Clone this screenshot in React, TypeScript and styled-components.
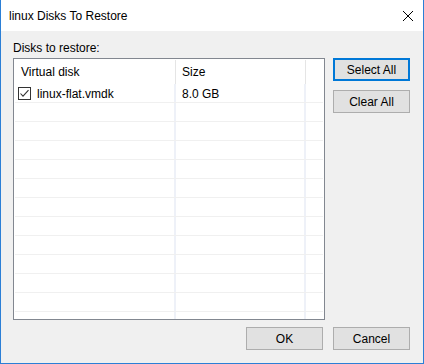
import React from 'react';
import styled, { createGlobalStyle } from 'styled-components';

const GlobalStyle = createGlobalStyle`
    html, body {
        margin: 0;
        padding: 0;
        background: #ffffff;
    }
    * {
        box-sizing: border-box;
    }
`;

const FONT = `"Liberation Sans", Arial, sans-serif`;

const disks = [{ name: 'linux-flat.vmdk', size: '8.0 GB', checked: true }];
const EMPTY_ROWS = 12;

export default function App() {
    return (
        <>
            <GlobalStyle />
            <Window>
                <TitleBar>
                    <Title>linux Disks To Restore</Title>
                    <CloseButton aria-label="Close">
                        <svg width="10" height="10" viewBox="0 0 10 10" shapeRendering="crispEdges">
                            <path d="M0 0 L10 10 M10 0 L0 10" stroke="#000" strokeWidth="1" fill="none" />
                        </svg>
                    </CloseButton>
                </TitleBar>
                <Body>
                    <Label>Disks to restore:</Label>
                    <Main>
                        <ListBox>
                            <HeaderRow>
                                <HeaderCell>Virtual disk</HeaderCell>
                                <HeaderCell>Size</HeaderCell>
                                <HeaderCell $last />
                            </HeaderRow>
                            {disks.map(d => (
                                <Row key={d.name}>
                                    <Cell $first>
                                        <CheckBox>
                                            {d.checked && (
                                                <svg width="11" height="11" viewBox="0 0 11 11">
                                                    <path d="M1.5 5.5 L4 8.2 L9.5 2.2" stroke="#333" strokeWidth="1.1" fill="none" />
                                                </svg>
                                            )}
                                        </CheckBox>
                                        <span>{d.name}</span>
                                    </Cell>
                                    <Cell>{d.size}</Cell>
                                    <Cell $last />
                                </Row>
                            ))}
                            {Array.from({ length: EMPTY_ROWS }).map((_, i) => (
                                <Row key={i}>
                                    <Cell $first />
                                    <Cell />
                                    <Cell $last />
                                </Row>
                            ))}
                        </ListBox>
                        <SideButtons>
                            <Button $focused>Select All</Button>
                            <Button>Clear All</Button>
                        </SideButtons>
                    </Main>
                    <Footer>
                        <Button>OK</Button>
                        <Button>Cancel</Button>
                    </Footer>
                </Body>
            </Window>
        </>
    );
}

const Window = styled.div`
    width: 424px;
    height: 364px;
    display: flex;
    flex-direction: column;
    border: 1px solid #2b7fd6;
    border-top: none;
    font-family: ${FONT};
    font-size: 12px;
    color: #000;
`;

const TitleBar = styled.div`
    height: 31px;
    flex-shrink: 0;
    display: flex;
    align-items: center;
    justify-content: space-between;
    padding-left: 8px;
    background: #ffffff;
`;

const Title = styled.span`
    font-size: 12px;
`;

const CloseButton = styled.div`
    width: 30px;
    height: 31px;
    display: flex;
    align-items: center;
    justify-content: center;
`;

const Body = styled.div`
    flex: 1;
    display: flex;
    flex-direction: column;
    background: #f0f0f0;
    padding: 9px 13px 13px 12px;
`;

const Label = styled.div`
    height: 16px;
    line-height: 16px;
    margin-bottom: 2px;
`;

const Main = styled.div`
    display: flex;
    gap: 8px;
`;

const ListBox = styled.div`
    width: 312px;
    height: 262px;
    border: 1px solid #828790;
    background: #ffffff;
    display: flex;
    flex-direction: column;
    overflow: hidden;
`;

const HeaderRow = styled.div`
    height: 25px;
    flex-shrink: 0;
    display: grid;
    grid-template-columns: 161px 130px 1fr;
    padding: 1px 1px 0;
`;

const HeaderCell = styled.div<{ $last?: boolean }>`
    display: flex;
    align-items: center;
    padding-left: 6px;
    padding-bottom: 1px;
    border-right: ${p => (p.$last ? 'none' : '1px solid #e5e5e5')};
`;

const Row = styled.div`
    height: 19px;
    flex-shrink: 0;
    display: grid;
    grid-template-columns: 161px 130px 1fr;
    margin: 0 1px;
    border-bottom: 1px solid #f0f0f0;
`;

const Cell = styled.div<{ $first?: boolean; $last?: boolean }>`
    display: flex;
    align-items: center;
    gap: 6px;
    padding-left: ${p => (p.$first ? '3px' : '6px')};
    padding-top: 1px;
    border-right: ${p => (p.$last ? 'none' : '2px solid #eef1f8')};
    white-space: nowrap;
`;

const CheckBox = styled.div`
    width: 13px;
    height: 13px;
    margin-top: -1px;
    border: 1px solid #333333;
    background: #ffffff;
    display: flex;
    align-items: center;
    justify-content: center;
`;

const SideButtons = styled.div`
    display: flex;
    flex-direction: column;
    gap: 9px;
`;

const Button = styled.div<{ $focused?: boolean }>`
    width: 77px;
    height: 23px;
    display: flex;
    align-items: center;
    justify-content: center;
    background: #e1e1e1;
    border: ${p => (p.$focused ? '2px solid #0078d7' : '1px solid #adadad')};
    font-size: 12px;
`;

const Footer = styled.div`
    display: flex;
    justify-content: flex-end;
    gap: 10px;
    margin-top: 7px;
`;
